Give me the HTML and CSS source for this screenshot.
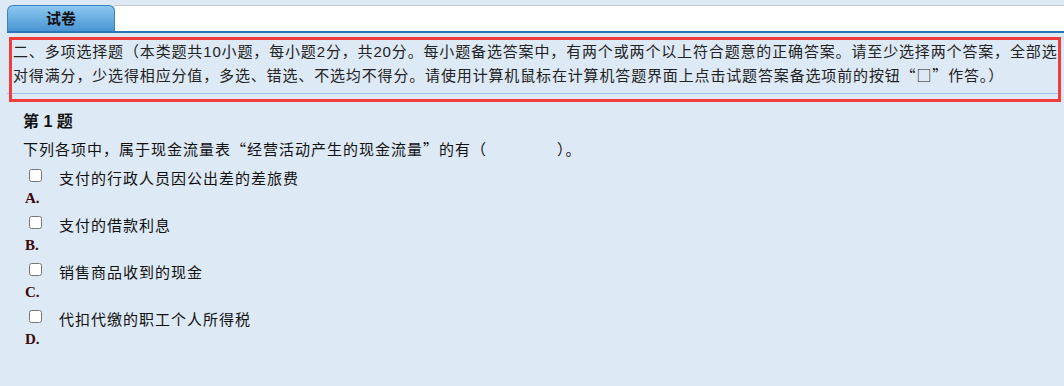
FILE: index.html
```html
<!DOCTYPE html>
<html lang="zh-CN">
<head>
    <meta charset="UTF-8">
    <title>试卷</title>
    <link rel="stylesheet" href="styles.css">
</head>
<body>
    <div class="tab-bar">
        <div class="tab">试卷</div>
        <div class="tab-rest"></div>
    </div>

    <div class="mark">
        <div class="section-title">二、多项选择题（本类题共10小题，每小题2分，共20分。每小题备选答案中，有两个或两个以上符合题意的正确答案。请至少选择两个答案，全部选对得满分，少选得相应分值，多选、错选、不选均不得分。请使用计算机鼠标在计算机答题界面上点击试题答案备选项前的按钮<span class="cq">“□”</span>作答。）</div>
    </div>

    <div class="question">
        <div class="q-no">第 1 题</div>
        <div class="q-text">下列各项中，属于现金流量表<span class="cq">“经营活动产生的现金流量”</span>的有（<span class="blank"></span>）。</div>

        <div class="option">
            <label class="opt-row"><input type="checkbox"><span>支付的行政人员因公出差的差旅费</span></label>
            <div class="opt-key">A.</div>
        </div>
        <div class="option">
            <label class="opt-row"><input type="checkbox"><span>支付的借款利息</span></label>
            <div class="opt-key">B.</div>
        </div>
        <div class="option">
            <label class="opt-row"><input type="checkbox"><span>销售商品收到的现金</span></label>
            <div class="opt-key">C.</div>
        </div>
        <div class="option">
            <label class="opt-row"><input type="checkbox"><span>代扣代缴的职工个人所得税</span></label>
            <div class="opt-key">D.</div>
        </div>
    </div>
</body>
</html>
```

FILE: styles.css
```css
body {
    margin: 0;
    padding: 0;
    background-color: #dde9f5;
    font-family: "Liberation Sans", "Noto Sans CJK SC", sans-serif;
    color: #1a1a1a;
}
/* quoted runs: CJK font so the curly quotes are full width */
.cq {
    font-family: "Noto Sans CJK SC", sans-serif;
    font-feature-settings: "fwid";
}
.tab-bar {
    display: flex;
    margin: 5px 0 0 7px;
    height: 26px;
    border-bottom: 2px solid #2b77b7;
}
.tab {
    width: 106px;
    border: 1px solid #3d80bf;
    border-bottom: none;
    border-radius: 6px 6px 0 0;
    background: linear-gradient(to bottom, #8cc8f0, #4a95d4);
    font-size: 15px;
    font-weight: bold;
    color: #111;
    text-align: center;
    line-height: 26px;
}
.tab-rest {
    flex: 1;
    background-color: #fff;
    border-top: 1px solid #c9c9c9;
}
.mark {
    margin: 7px 6px 0 12px;
    padding-bottom: 5px;
    outline: 3px solid #f03c3c;
}
.section-title {
    margin-left: -5px;
    padding: 0 0 6px 6px;
    border-bottom: 1px solid #a3bdf5;
    font-size: 15px;
    letter-spacing: 0.85px;
    line-height: 23px;
    color: #222;
}
.question {
    padding: 13px 0 0 23px;
}
.q-no {
    font-size: 16px;
    font-weight: bold;
    line-height: 20px;
    color: #111;
}
.q-text {
    margin-top: 6px;
    font-size: 15px;
    letter-spacing: 1px;
    line-height: 22px;
    color: #111;
}
.blank {
    display: inline-block;
    width: 70px;
}
.option {
    margin-top: 5px;
}
.option + .option {
    margin-top: 7px;
}
.opt-row {
    display: flex;
    align-items: center;
    height: 22px;
    font-size: 15px;
    letter-spacing: 1px;
    color: #111;
}
.opt-row input {
    margin: 0 17px 4px 6px;
    width: 13px;
    height: 13px;
}
.opt-key {
    margin: 2px 0 0 2px;
    font-family: "Liberation Serif", serif;
    font-size: 15px;
    font-weight: bold;
    line-height: 16px;
    color: #3a0808;
}
```
